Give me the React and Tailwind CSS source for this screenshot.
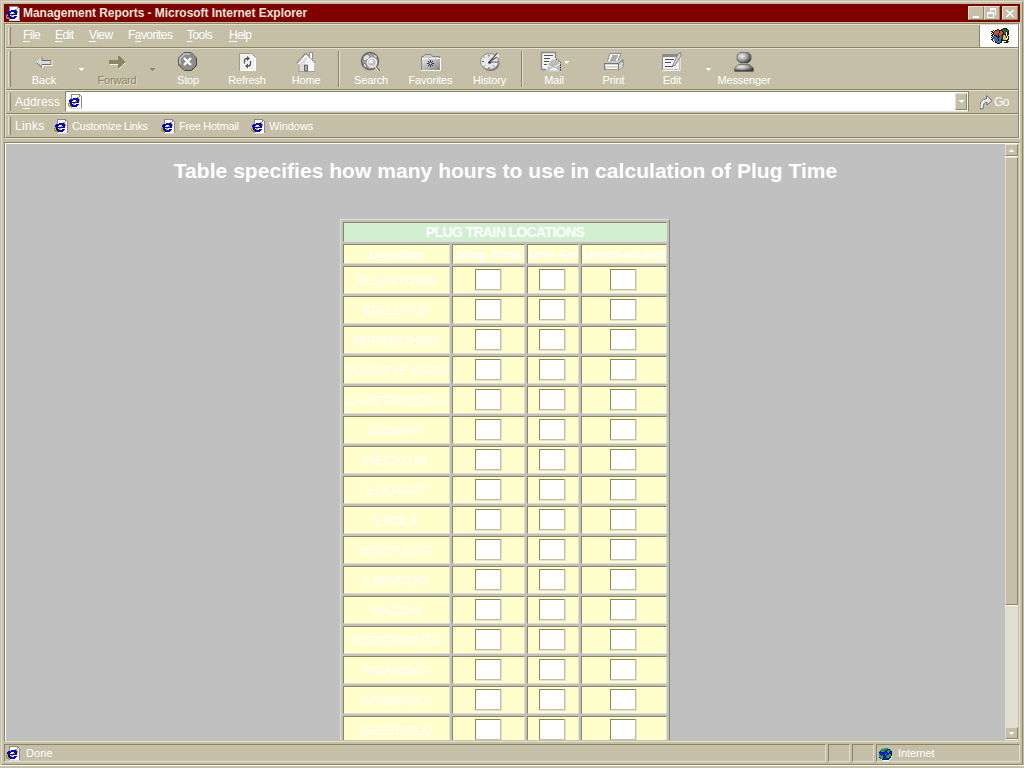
import React from "react";

const PAGE_COLORS = { g: "#8a8a8a", w: "#ffffff", b: "#0000f0", n: "#000080", y: "#a89c00", l: "#d8d8d8" };

function PixelArt({ rows, colors, className }) {
  const width = rows[0].length;
  return (
    <svg width={width} height={rows.length} viewBox={`0 0 ${width} ${rows.length}`} shapeRendering="crispEdges" className={className}>
      {rows.map((row, y) =>
        row.split("").map((c, x) => (colors[c] ? <rect key={`${x}-${y}`} x={x} y={y} width="1" height="1" fill={colors[c]} /> : null))
      )}
    </svg>
  );
}

const IE_ROWS = [
  "...ggggggggg...",
  "...gwwwwwwwgg..",
  "...gwwwwwwwgwg.",
  "...gwwwwwyywwg.",
  "...gwbbbbbywwg.",
  "..bbbbbbbbbywg.",
  ".nbbnwwwnbbywg.",
  ".nbbwwwyybbwwg.",
  ".ybbbbbbbbbwwg.",
  "yybnwyywwwwwwg.",
  "y.nbbywwnbbwwg.",
  "yyynbbbbbbwwwg.",
  ".yygnbbbnwwwwg.",
  "...gwwwwwwwwwg.",
  "...lllllllllll.",
];

const IeIcon = ({ className }) => <PixelArt rows={IE_ROWS} colors={PAGE_COLORS} className={className} />;

const DownArrow = ({ fill = "#ffffff" }) => (
  <svg width="5" height="3" viewBox="0 0 5 3" shapeRendering="crispEdges"><path d="M0 0h5v1H4v1H3v1H2V2H1V1H0z" fill={fill} /></svg>
);
const UpArrow = () => (
  <svg width="5" height="3" viewBox="0 0 5 3" shapeRendering="crispEdges"><path d="M2 0h1v1h1v1h1v1H0V2h1V1h1z" fill="#fff" /></svg>
);

const icons = {
  Back: (
    <svg width="22" height="22" viewBox="0 0 22 22">
      <path d="M3.500 11.500L9 6.500V9.500h9v4H9v3z" fill="#d8d8d8" stroke="#6b6b6b" />
      <path d="M3.500 11.500L8.500 7" stroke="#fff" fill="none" /><path d="M9.500 17v-2.500h9.500v-5" stroke="#fff" fill="none" />
    </svg>
  ),
  Forward: (
    <svg width="22" height="22" viewBox="0 0 22 22" shapeRendering="crispEdges">
      <path d="M4 10h9V6l6 6-6 6v-4H4z" fill="#fff" opacity=".8" />
      <path d="M3 9h9V5h1l6 6-6 6h-1v-4H3z" fill="#8a8660" />
    </svg>
  ),
  Stop: (
    <svg width="22" height="22" viewBox="0 0 22 22">
      <path d="M7 1.500h7l5.500 5.500v7l-5.500 5.500H7l-5.500-5.500V7z" fill="#8d8d8d" stroke="#5c5c5c" />
      <path d="M3 13V7.500L7.500 3H13" fill="none" stroke="#c4c4c4" strokeWidth="1.500" />
      <path d="M8 19.500h6.500l5-5V8" fill="none" stroke="#444" />
      <path d="M7 7l7 7M14 7l-7 7" stroke="#fff" strokeWidth="2.400" />
    </svg>
  ),
  Refresh: (
    <svg width="22" height="22" viewBox="0 0 22 22">
      <path d="M3.500 2.500h12l4 4v13h-16z" fill="#f1f1f1" stroke="#9a9a9a" />
      <path d="M4 19.500h15.500V7M15 3v4h4" fill="none" stroke="#fff" />
      <path d="M8.500 12.500V9.500q0-2 3-2M14.500 10v3q0 2-3 2" fill="none" stroke="#555" strokeWidth="1.300" />
      <path d="M11 5l3 2.500L11 10zM12 12.500l-3 2.500L12 17.500z" fill="#555" />
    </svg>
  ),
  Home: (
    <svg width="22" height="22" viewBox="0 0 22 22">
      <path d="M14.500 1.500h3v8h-3z" fill="#fff" stroke="#777" strokeWidth=".8" />
      <path d="M4 11l7-8 7 8v9H4z" fill="#dcdcdc" />
      <path d="M10 20V11l5-6 4 6v9z" fill="#f8f8f8" />
      <path d="M2 12L10.500 2.500 20 12" fill="none" stroke="#7c7c7c" strokeWidth="1.400" strokeDasharray="1.500 .7" />
      <path d="M3 13.500L11 4.500 19.500 13.500" fill="none" stroke="#fff" strokeWidth="1.300" />
      <path d="M3 20.500h17M4 13v7" stroke="#a0a0a0" fill="none" />
      <path d="M9.500 20v-6h3v6z" fill="#aaa" stroke="#666" />
    </svg>
  ),
  Search: (
    <svg width="22" height="22" viewBox="0 0 22 22">
      <circle cx="10" cy="10" r="8.500" fill="#a6a6a6" stroke="#666" strokeWidth="1.500" />
      <path d="M3 6l4-3 3 2-1 3-4 2-2-1zM12 2l5 3v3l-3-2zM3 12l3 1 1 4-3-1z" fill="#dedede" stroke="#6b6b6b" strokeWidth=".8" />
      <circle cx="12" cy="11.500" r="4.500" fill="#c4c4c4" stroke="#eee" strokeWidth="1.400" />
      <circle cx="11" cy="10.500" r="1.700" fill="#fff" />
      <path d="M15.500 15l4.500 5" stroke="#fff" strokeWidth="2.600" /><path d="M16 15l4 5" stroke="#666" strokeWidth="1.300" />
    </svg>
  ),
  Favorites: (
    <svg width="22" height="22" viewBox="0 0 22 22">
      <defs><linearGradient id="folder" x1="0" y1="0" x2="1" y2="1"><stop offset="0" stopColor="#e8e8e8" /><stop offset="1" stopColor="#858585" /></linearGradient></defs>
      <path d="M1.500 18.500V5.500h2l1.500-2h6l1.500 2h7v13z" fill="#ccc" stroke="#858585" />
      <path d="M2 7h18v12H2z" fill="url(#folder)" />
      <path d="M1 19.500h19.500V7" stroke="#fff" fill="none" />
      <path d="M1.500 19V6" stroke="#858585" /><path d="M2 7.500h18" stroke="#fff" />
      <path d="M10.500 9v7M7 12.500h7M8 10l5 5M13 10l-5 5" stroke="#222" strokeWidth=".9" />
      <circle cx="10.500" cy="12.500" r="1" fill="#fff" />
    </svg>
  ),
  History: (
    <svg width="22" height="22" viewBox="0 0 22 22">
      <ellipse cx="11.500" cy="12.500" rx="9" ry="7.500" fill="#777" /><ellipse cx="10.500" cy="10.500" rx="9" ry="8" fill="#e9e9e9" stroke="#888" />
      <path d="M10 3.500v2M3 10.500h2M10 18v-2M5 5.500l1 1M5 15.500l1-1M15 15.500l-1-1" stroke="#555" />
      <path d="M10 11L18.500 1.500l1.500 4z" fill="#fff" /><path d="M10 11l8.500-9M10 11h9M10 11l8-5" stroke="#555" strokeWidth="1.100" />
      <path d="M9 11.500l3 .5" stroke="#333" strokeWidth="1.500" />
    </svg>
  ),
  Mail: (
    <svg width="22" height="22" viewBox="0 0 22 22">
      <path d="M2.500 1.500h14v17h-14z" fill="#f4f4f4" stroke="#8b8b8b" strokeWidth="1.400" />
      <path d="M5 4.500h9M5 7.500h6M5 10.500h8M5 13.500h3" stroke="#555" />
      <path d="M8 14l5-6h4l5 5v7H8z" fill="#bcbcbc" stroke="#fff" />
      <path d="M8 14l6 3 7-4" fill="none" stroke="#fff" /><path d="M8 20l5-4h3l5 4z" fill="#f2f2f2" stroke="#999" strokeWidth=".6" />
      <path d="M17 8l4.500 3.500V20" fill="none" stroke="#222" strokeDasharray="1.500 1" />
    </svg>
  ),
  Print: (
    <svg width="22" height="22" viewBox="0 0 22 22">
      <path d="M7 2.500h11l-4 9H4z" fill="#fff" stroke="#888" />
      <path d="M9 5h6M8 7h6M7 9h6" stroke="#555" />
      <path d="M1 12l4-2h10l5-3v8l-4 4H2z" fill="#c7c7c7" />
      <path d="M1 12.500h14.500M1.500 12v6.500h14V12.500l4.500-4v7l-4.500 4" fill="none" stroke="#777" />
      <path d="M2 14.500h13M3 17.500h12" stroke="#fff" strokeWidth="1.600" /><path d="M16 16l4-4M16 18.500l4-4" stroke="#fff" strokeWidth=".8" />
    </svg>
  ),
  Edit: (
    <svg width="22" height="22" viewBox="0 0 22 22">
      <path d="M1.500 3.500h17v15.500h-17z" fill="#f3f3f3" stroke="#8b8b8b" />
      <path d="M2 5h16" stroke="#8b8b8b" strokeWidth="2" /><path d="M1 19.500h18V6" fill="none" stroke="#fff" />
      <path d="M4 8.500h9M4 11.500h6M4 15.500h8" stroke="#555" />
      <path d="M11.500 15l5.500-12 2.500-1.500.500 3-6 10z" fill="#d4d4d4" stroke="#777" strokeWidth=".9" />
    </svg>
  ),
  Messenger: (
    <svg width="22" height="22" viewBox="0 0 22 22">
      <defs><radialGradient id="buddy" cx=".35" cy=".35" r=".7"><stop offset="0" stopColor="#f2f2f2" /><stop offset=".5" stopColor="#a8a8a8" /><stop offset="1" stopColor="#3a3a3a" /></radialGradient></defs>
      <path d="M4 4l3-2.500h8l3 2.500v5l-3 3H7.500L4 9z" fill="url(#buddy)" stroke="#666" strokeWidth=".7" />
      <path d="M1.500 20v-3l4-3.500h11l4 3.500v3z" fill="url(#buddy)" stroke="#666" strokeWidth=".7" />
      <path d="M1.500 20h19" stroke="#444" strokeWidth="1.200" />
    </svg>
  ),
};

const Grip = ({ className }) => <div className={"ml-[2px] w-[3px] shrink-0 border-l border-r border-l-[#e1dfd2] border-r-[#8a8660] " + className} />;

function Tool({ name, width, disabled, iconShift = "", tracking = "tracking-[-0.15px]" }) {
  return (
    <div className={`flex shrink-0 flex-col items-center pt-[2px] ${width}`}>
      <div className={`h-[22px] ${iconShift}`}>{icons[name]}</div>
      <span className={`h-[14px] text-[11px] leading-[14px] whitespace-nowrap ${tracking} ${disabled ? "text-[#8a8660] [text-shadow:1px_1px_0_#e1dfd2]" : ""}`}>{name}</span>
    </div>
  );
}

const Separator = () => <div className="mr-[2px] ml-[3px] my-[2px] w-[2px] shrink-0 border-l border-r border-l-[#8a8660] border-r-[#e1dfd2]" />;
const RowLine = () => <div className="h-[2px] shrink-0 border-t border-b border-t-[#8a8660] border-b-[#e1dfd2]" />;

const MENU = [
  ["", "F", "ile", "w-[32px]"],
  ["", "E", "dit", "w-[34px]"],
  ["", "V", "iew", "w-[39px]"],
  ["F", "a", "vorites", "w-[59px]"],
  ["", "T", "ools", "w-[42px]"],
  ["", "H", "elp", "w-[40px]"],
];

const LOCATIONS = [
  "ALLENTOWN", "BELLEVUE", "BIRMINGHAM", "BUCKEYE YARD", "CHATTANOOGA", "CONWAY", "DECATUR", "ELKHART",
  "ENOLA", "KNOXVILLE", "LINWOOD", "MACON", "PORTSMOUTH", "ROANOKE", "SANDUSKY", "SHEFFIELD",
];

const CELL = "overflow-hidden border border-t-[#8a8660] border-l-[#8a8660] border-r-[#e1dfd2] border-b-[#e1dfd2] ";
const RAISED = "flex items-center justify-center border border-t-[#e1dfd2] border-l-[#e1dfd2] border-r-[#8a8660] border-b-[#8a8660] bg-[#c4bfa6] ";

function HoursCell({ indent }) {
  return (
    <div className={CELL + "bg-[#ffffcc] pt-[2px] " + indent}>
      <div className="h-[22px] w-[27px] border-r border-b border-[#e1dfd2]">
        <div className="h-full w-full border border-t-[#8a8660] border-l-[#8a8660] border-r-[#c4bfa6] border-b-[#c4bfa6] bg-white" />
      </div>
    </div>
  );
}

function TitleBar() {
  return (
    <div className="flex h-[18px] shrink-0 items-center bg-[#800000] pr-[2px] pl-[2px]">
      <IeIcon className="mt-px" />
      <span className="ml-[2px] text-[12px] leading-[18px] font-bold tracking-[-0.04px] whitespace-nowrap text-[#e9e6da]">Management Reports - Microsoft Internet Explorer</span>
      <div className="ml-auto flex">
        <div className={RAISED + "h-[14px] w-[16px]"}>
          <svg width="12" height="10" shapeRendering="crispEdges"><path d="M3 8h6v2H3z" fill="#fff" /></svg>
        </div>
        <div className={RAISED + "h-[14px] w-[16px]"}>
          <svg width="10" height="10" viewBox="0 0 10 10" shapeRendering="crispEdges"><path d="M3 0h6v7H7V6h1V2H4v2H3zM0 4h7v6H0zM1 6v3h5V6z" fillRule="evenodd" fill="#fff" /></svg>
        </div>
        <div className={RAISED + "ml-[2px] h-[14px] w-[16px]"}>
          <svg width="8" height="7" viewBox="0 0 8 7" shapeRendering="crispEdges"><path d="M0 0h2v1h1v1h2V1h1V0h2v1H7v1H6v1H5v1h1v1h1v1h1v1H6V6H5V5H3v1H2v1H0V6h1V5h1V4h1V3H2V2H1V1H0z" fill="#fff" /></svg>
        </div>
      </div>
    </div>
  );
}

const FLAG_ROWS = [
  "............kkkk....",
  "......kk..kkgggkk...",
  "..k.kkrrkkkggggggk..",
  "kk.krrrrkrrkgggkgk..",
  ".kkrrrrrkrrrkggwkk..",
  "k.krrrrkrrrrkggwkk..",
  ".kkrrrrkrrrkkkkwkk..",
  "kk.kkkrkrrkkookwk...",
  ".kbbbkkkkbbkoookwk..",
  "k.kbbbbkbbbkoookwk..",
  ".kbbbbkbbbbkooowwk..",
  "kk.bbbbkbbkkooowkk..",
  ".k.bbbbkbbkkkkkkk...",
  "..k.kbbbbbk.wwwkkk..",
  "....kkbbbkk..kkkk...",
  "......kkk...........",
];

function Toolbars() {
  return (
    <div className="mt-px h-[116px] shrink-0 border border-t-[#8a8660] border-l-[#8a8660] border-r-white border-b-[#e1dfd2]">
      <div className="flex h-full flex-col border border-t-[#e1dfd2] border-l-[#e1dfd2] border-r-[#8a8660] border-b-[#8a8660]">
        <div className="flex h-[22px] shrink-0">
          <Grip className="my-[2px]" />
          <div className="flex pl-[12px] text-[12px] leading-[21px] tracking-[-0.55px]">
            {MENU.map(([a, u, b, w]) => (
              <span key={u} className={`shrink-0 whitespace-nowrap ${w}`}>{a}<span className="underline underline-offset-2">{u}</span>{b}</span>
            ))}
          </div>
          <div className="ml-auto flex w-[39px] items-center justify-center border-l border-l-[#8a8660] bg-white">
            <PixelArt rows={FLAG_ROWS} colors={{ k: "#1c1c1c", r: "#c4503c", g: "#1d6a22", b: "#3f68a8", o: "#e8c020", w: "#ffffff" }} className="ml-[3px]" />
          </div>
        </div>
        <RowLine />
        <div className="flex h-[40px] shrink-0">
          <Grip className="my-[2px]" />
          <div className="flex pl-[4px]">
            <Tool name="Back" width="w-[58px]" tracking="tracking-normal" />
            <div className="flex w-[16px] justify-center pt-[19px]"><DownArrow /></div>
            <Tool name="Forward" width="w-[56px]" tracking="tracking-[-0.2px]" disabled />
            <div className="flex w-[14px] justify-center pt-[19px]"><DownArrow fill="#8a8660" /></div>
            <Tool name="Stop" width="w-[58px]" />
            <Tool name="Refresh" width="w-[60px]" />
            <Tool name="Home" width="w-[58px]" />
            <Separator />
            <Tool name="Search" width="w-[58px]" />
            <Tool name="Favorites" width="w-[61px]" />
            <Tool name="History" width="w-[57px]" />
            <Separator />
            <div className="relative">
              <Tool name="Mail" width="w-[58px]" iconShift="-ml-[8px]" />
              <div className="absolute top-[12px] left-[39px]"><DownArrow /></div>
            </div>
            <Tool name="Print" width="w-[61px]" />
            <Tool name="Edit" width="w-[56px]" />
            <div className="flex w-[16px] justify-center pt-[19px]"><DownArrow /></div>
            <Tool name="Messenger" width="w-[56px]" />
          </div>
        </div>
        <RowLine />
        <div className="flex h-[22px] shrink-0">
          <Grip className="my-[2px]" />
          <span className="w-[54px] shrink-0 pl-[4px] text-[12px] leading-[22px] tracking-[0.15px]">A<span className="underline underline-offset-2">d</span>dress</span>
          <div className="flex h-[21px] flex-1 border border-t-[#8a8660] border-l-[#8a8660] border-r-[#8a8660] border-b-[#e1dfd2] bg-white pl-[2px]">
            <IeIcon className="mt-[2px]" />
            <div className={RAISED + "mt-px mr-px ml-auto h-[17px] w-[12px]"}><DownArrow /></div>
          </div>
          <div className="flex w-[49px] shrink-0 items-center pl-[10px]">
            <svg width="14" height="16" viewBox="0 0 14 16">
              <path d="M1.500 15Q0 5 7.500 5V1.500L13 6.500 8 11V8Q4 8 4 15z" fill="#e8e8e8" stroke="#6f6f6f" />
              <path d="M2 14q0-8 6-8" fill="none" stroke="#fff" />
            </svg>
            <span className="ml-px text-[12px] leading-[20px] tracking-[-0.7px]">Go</span>
          </div>
        </div>
        <RowLine />
        <div className="flex h-[22px] shrink-0 items-center text-[11px] leading-[20px] whitespace-nowrap">
          <Grip className="my-[2px] self-stretch" />
          <span className="w-[43px] shrink-0 pl-[4px] text-[12px] tracking-[0.3px]">Links</span>
          <div className="flex w-[107px] items-center"><IeIcon /><span className="ml-[3px] tracking-[-0.33px]">Customize Links</span></div>
          <div className="flex w-[90px] items-center"><IeIcon /><span className="ml-[3px] tracking-[-0.28px]">Free Hotmail</span></div>
          <div className="flex items-center"><IeIcon /><span className="ml-[3px] tracking-[-0.05px]">Windows</span></div>
        </div>
      </div>
    </div>
  );
}

function Report() {
  return (
    <div className="h-[596px] flex-1 overflow-hidden bg-[#c0c0c0]">
      <h1 className="h-[75px] pt-[15px] text-center text-[21px] leading-[24px] font-bold tracking-[0.04px] whitespace-nowrap">Table specifies how many hours to use in calculation of Plug Time</h1>
      <div className="ml-[334px] w-[330px] border border-t-[#e1dfd2] border-l-[#e1dfd2] border-r-[#8a8660] border-b-[#8a8660] p-[2px]">
        <div className="grid grid-cols-[107px_73px_52px_86px] gap-[2px] text-center text-[13px] whitespace-nowrap">
          <div className={CELL + "col-span-4 h-[20px] bg-[#d0f0d0] text-[14px] leading-[19px] font-bold tracking-[-0.62px]"}>PLUG TRAIN LOCATIONS</div>
          {["Location", "Shop Time", "Unit Arr", "Unscheduled"].map((h) => (
            <div key={h} className={CELL + "h-[20px] bg-[#ffffcc] leading-[20px] font-bold"}>{h}</div>
          ))}
          {LOCATIONS.map((name) => (
            <React.Fragment key={name}>
              <div className={CELL + "h-[28px] bg-[#ffffcc] leading-[27px] tracking-[-0.05px]"}>{name}</div>
              <HoursCell indent="pl-[22px]" />
              <HoursCell indent="pl-[11px]" />
              <HoursCell indent="pl-[28px]" />
            </React.Fragment>
          ))}
        </div>
      </div>
    </div>
  );
}

const GLOBE_ROWS = [
  "....llggg....",
  "..gkggggbbk..",
  ".gggggbbbggk.",
  "gbgggbbbgggkk",
  "bbbbbbbbbgbbk",
  "bbbbbbbgbbbbk",
  "gbbbbbgbbbggk",
  "ggbgbbbbggggk",
  "ggggkbbggggkw",
  "bgggkbbbggbkw",
  ".bggkbbbbbkw.",
  "..wkkkbbkkw..",
  "....wwwwww...",
];

function StatusBar() {
  return (
    <div className="mt-[2px] flex h-[18px] shrink-0 gap-[2px] text-[11px] leading-[16px]">
      <div className={CELL + "flex w-[822px] items-center pl-px"}><IeIcon /><span className="ml-[5px] tracking-[0.1px]">Done</span></div>
      <div className={CELL + "w-[22px]"} />
      <div className={CELL + "w-[22px]"} />
      <div className={CELL + "flex w-[144px] items-center pl-[2px]"}>
        <PixelArt rows={GLOBE_ROWS} colors={{ l: "#8a8a8a", g: "#1fb01f", b: "#0a1ad8", k: "#001848", w: "#ffffff" }} className="mt-[2px]" />
        <span className="ml-[6px] tracking-[-0.1px]">Internet</span>
      </div>
    </div>
  );
}

export default function App() {
  return (
    <div className="h-[768px] w-[1024px] overflow-hidden bg-[#c4bfa6] pt-px font-['Liberation_Sans',Arial,sans-serif] text-white">
      <div className="ml-px flex h-[764px] w-[1022px] flex-col border border-t-[#e1dfd2] border-l-[#e1dfd2] border-r-[#8a8660] border-b-[#8a8660] p-[2px]">
        <TitleBar />
        <Toolbars />
        <div className="mt-[3px] h-[600px] shrink-0 border border-t-[#8a8660] border-l-[#8a8660] border-r-[#e1dfd2] border-b-[#e1dfd2]">
          <div className="flex h-full border border-t-white border-l-white border-r-[#c4bfa6] border-b-[#c4bfa6]">
            <Report />
            <div className="flex w-[13px] shrink-0 flex-col bg-[#e1dfd2]">
              <div className={RAISED + "h-[12px]"}><UpArrow /></div>
              <div className="h-px bg-white" />
              <div className={RAISED + "h-[448px]"} />
              <div className="h-px bg-white" />
              <div className={RAISED + "mt-auto h-[12px]"}><DownArrow /></div>
              <div className="h-px bg-white" />
            </div>
          </div>
        </div>
        <StatusBar />
      </div>
      <div className="h-px bg-white" />
    </div>
  );
}
